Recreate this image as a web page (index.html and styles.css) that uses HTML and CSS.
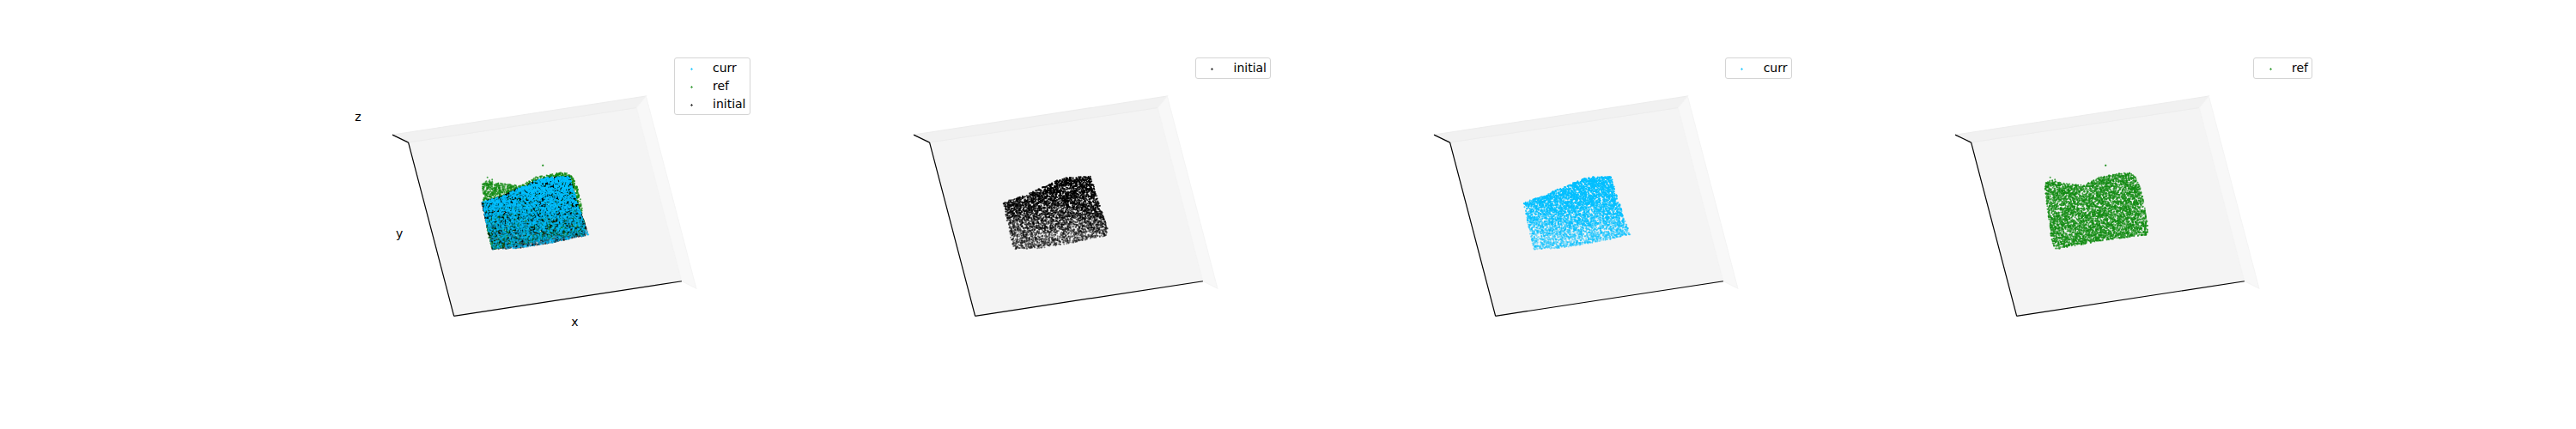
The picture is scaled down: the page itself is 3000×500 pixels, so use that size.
FILE: index.html
```html
<!DOCTYPE html>
<html lang="en">
<head>
<meta charset="utf-8">
<title>Point clouds</title>
<link rel="stylesheet" href="styles.css">
</head>
<body>
<svg class="defs" aria-hidden="true">
  <symbol id="box" viewBox="0 0 505 385" overflow="visible">
    <path class="pane-floor" d="M100.5 106L366 65.5L418.5 267.5L153.5 308Z"/>
    <path class="pane-back" d="M82 97L377 52L366 65.5L100.5 106Z"/>
    <path class="pane-side" d="M377 52L435.5 276L418.5 267.5L366 65.5Z"/>
    <path class="axis" d="M82 97L100.5 106M100.5 106L153.5 308M153.5 308L418.5 267.5"/>
  </symbol>
</svg>
<main class="plots">
  <figure class="plot">
    <svg class="scene" viewBox="0 0 505 385" role="img" aria-label="curr, ref and initial point clouds">
      <use href="#box"/>
      <g data-clouds="initial ref initial curr"></g>
      <text x="42" y="81">z</text>
      <text x="90" y="217">y</text>
      <text x="294" y="320">x</text>
    </svg>
    <ul class="legend">
      <li class="curr">curr</li>
      <li class="ref">ref</li>
      <li class="initial">initial</li>
    </ul>
  </figure>
  <figure class="plot">
    <svg class="scene" viewBox="0 0 505 385" role="img" aria-label="initial point cloud">
      <use href="#box"/>
      <g data-clouds="initial"></g>
    </svg>
    <ul class="legend"><li class="initial">initial</li></ul>
  </figure>
  <figure class="plot">
    <svg class="scene" viewBox="0 0 505 385" role="img" aria-label="curr point cloud">
      <use href="#box"/>
      <g data-clouds="curr"></g>
    </svg>
    <ul class="legend"><li class="curr">curr</li></ul>
  </figure>
  <figure class="plot">
    <svg class="scene" viewBox="0 0 505 385" role="img" aria-label="ref point cloud">
      <use href="#box"/>
      <g data-clouds="ref"></g>
    </svg>
    <ul class="legend"><li class="ref">ref</li></ul>
  </figure>
</main>
<script src="clouds.js"></script>
</body>
</html>
```
FILE: styles.css
```css
body {
  margin: 0;
  background: #fff;
  color: #000;
  font: 14px/17px "DejaVu Sans", sans-serif;
}

.defs {
  position: absolute;
  width: 0;
  height: 0;
}

.plots {
  display: grid;
  grid-template-columns: repeat(4, 1fr);
  column-gap: 101px;
  padding: 60px 10% 0 12.5%;
}

.plot {
  position: relative;
  margin: 0;
}

.scene {
  display: block;
  width: 100%;
  overflow: visible;
}

.scene text {
  font-size: 14px;
  text-anchor: middle;
}

.pane-floor {
  fill: #f4f4f4;
  stroke: #efefef;
}

.pane-back {
  fill: #f1f1f1;
  stroke: #ececec;
}

.pane-side {
  fill: #f8f8f8;
  stroke: #f4f4f4;
}

.axis {
  fill: none;
  stroke: #000;
  stroke-width: 1.2;
}

.cloud {
  fill: none;
  stroke: currentColor;
  stroke-width: 2;
  stroke-linecap: round;
}

.cloud.curr,
.curr::before {
  color: #00bfff;
}

.cloud.ref,
.ref::before {
  color: #108a10;
}

.cloud.initial,
.initial::before {
  color: #000;
}

.legend {
  position: absolute;
  top: 7px;
  right: 7px;
  display: grid;
  row-gap: 4px;
  margin: 0;
  padding: 3px 4px 3px 5px;
  border: 1px solid #d4d4d4;
  border-radius: 3px;
  background: #fff;
  list-style: none;
}

.legend li {
  display: flex;
  column-gap: 11px;
}

.legend li::before {
  content: "";
  width: 28px;
  background:
    linear-gradient(currentColor, currentColor) 50% 9px / 3px 1px no-repeat,
    linear-gradient(currentColor, currentColor) 50% 8px / 1px 3px no-repeat;
  opacity: 0.7;
}
```
FILE: clouds.js
```js
const slab = [
  [186, 175.5], [212, 167.5], [227, 159.5], [237, 156.5], [248, 150.5], [262, 146.5],
  [288, 145.5], [298, 178], [310, 213.5], [268, 222.5], [229, 229], [198, 230.5], [191, 200]
];

const clouds = {
  initial: { seed: 11, count: 4200, outline: slab, fade: [0.95, 0.45], extra: [] },
  curr: { seed: 29, count: 4600, outline: slab, fade: [1, 0.45], extra: [[310, 213]] },
  ref: {
    seed: 47,
    count: 4900,
    outline: [
      [186, 154], [193, 149.5], [207, 153.5], [232, 156], [249, 146], [264, 143.5],
      [279, 140.5], [286, 141.5], [292, 146.5], [299, 163], [302, 180], [306, 203],
      [305.5, 213.5], [254, 220], [198.5, 230.5], [194, 220], [188, 175]
    ],
    fade: [0.75, 0.7],
    extra: [[257, 132.5], [257, 132.5], [192.5, 146.5], [195, 150], [198, 149], [302.5, 182.5]]
  }
};

function randomFrom(seed) {
  let s = seed;
  return () => {
    s = (s + 0x6d2b79f5) | 0;
    let t = Math.imul(s ^ (s >>> 15), 1 | s);
    t = (t + Math.imul(t ^ (t >>> 7), 61 | t)) ^ t;
    return ((t ^ (t >>> 14)) >>> 0) / 4294967296;
  };
}

function inside(x, y, outline) {
  let hit = false;
  for (let i = 0, j = outline.length - 1; i < outline.length; j = i++) {
    const [ax, ay] = outline[i];
    const [bx, by] = outline[j];
    if ((ay > y) !== (by > y) && x < ((bx - ax) * (y - ay)) / (by - ay) + ax) hit = !hit;
  }
  return hit;
}

function drawCloud(group, name, seedShift) {
  const { seed, count, outline, fade, extra } = clouds[name];
  const random = randomFrom(seed + seedShift);
  const points = [...extra];
  while (points.length < count) {
    const x = 185 + random() * 127;
    const y = 138 + random() * 94;
    if (!inside(x, y, outline)) continue;
    const depth = (y - 150 + (x - 187) * 0.15) / 92;
    if (name !== "ref" && random() < depth * 0.3) continue;
    points.push([x, y]);
  }
  points.sort((a, b) => a[1] - b[1]);
  // Small batches let overlapping dots build up opacity.
  for (let pass = 0; pass < 12; pass++) {
    for (let band = 0; band < 14; band++) {
      const size = points.length / 14;
      const batch = points
        .slice(Math.floor(band * size), Math.floor((band + 1) * size))
        .filter((_, i) => i % 12 === pass);
      const path = document.createElementNS("http://www.w3.org/2000/svg", "path");
      path.setAttribute("class", "cloud " + name);
      path.setAttribute("stroke-opacity", (fade[0] + (fade[1] - fade[0]) * (band / 13)).toFixed(2));
      path.setAttribute("d", batch.map(([x, y]) => `M${x.toFixed(1)} ${y.toFixed(1)}h.01`).join(""));
      group.append(path);
    }
  }
}

document.querySelectorAll("[data-clouds]").forEach(group => {
  group.dataset.clouds.split(" ").forEach((name, i) => drawCloud(group, name, i * 100));
});
```
